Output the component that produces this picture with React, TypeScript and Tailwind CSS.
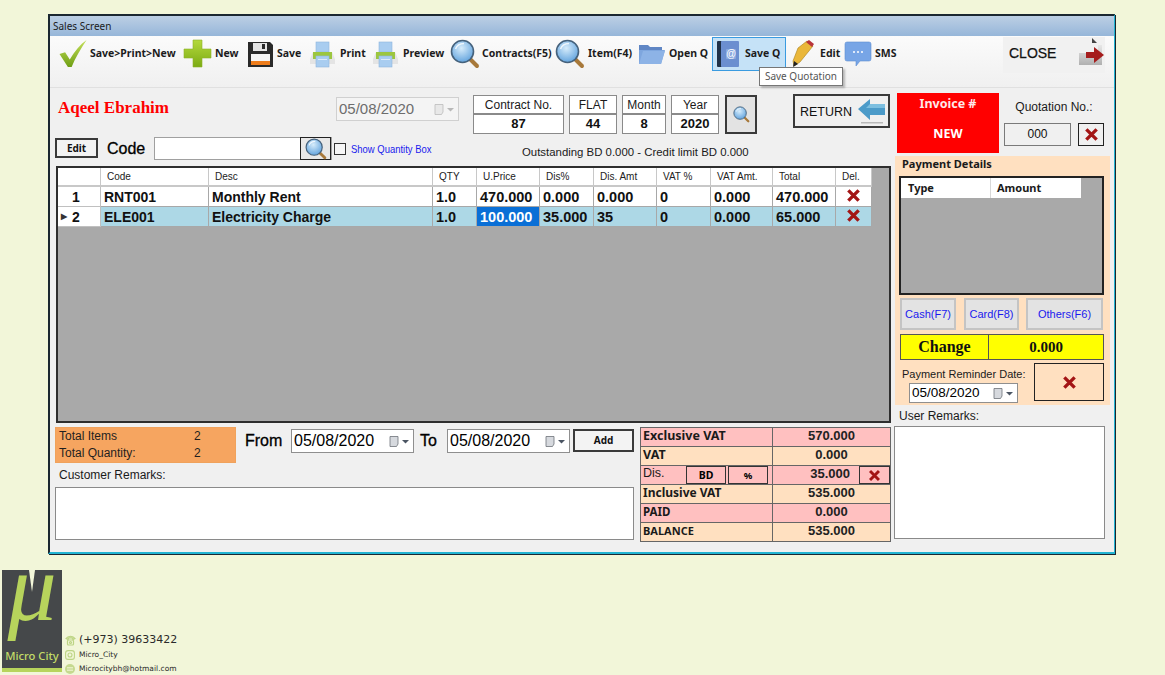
import type { ReactNode } from "react";

const uiBold = "font-['Noto_Sans',sans-serif] font-bold";
const heavy = "[-webkit-text-stroke:0.3px_#000]";

const rows = [
  { no: "1", code: "RNT001", desc: "Monthly Rent", qty: "1.0", price: "470.000", disPct: "0.000", disAmt: "0.000", vat: "0", vatAmt: "0.000", total: "470.000" },
  { no: "2", code: "ELE001", desc: "Electricity Charge", qty: "1.0", price: "100.000", disPct: "35.000", disAmt: "35", vat: "0", vatAmt: "0.000", total: "65.000" },
];

const columns = ["Code", "Desc", "QTY", "U.Price", "Dis%", "Dis. Amt", "VAT %", "VAT Amt.", "Total", "Del."];

function Magnifier({ size = 30 }: { size?: number }) {
  return (
    <svg width={size} height={size} viewBox="0 0 30 30">
      <defs>
        <radialGradient id="lens" cx="0.45" cy="0.35" r="0.7">
          <stop offset="0" stopColor="#d6ecfb" />
          <stop offset="1" stopColor="#5b9fdc" />
        </radialGradient>
      </defs>
      <path d="M19 19 L27 27" stroke="#a8793a" strokeWidth="4" strokeLinecap="round" />
      <circle cx="12.5" cy="12.5" r="11" fill="url(#lens)" stroke="#46627c" strokeWidth="1.6" />
      <path d="M5.5 10 C7 6 10 4.5 14 4.5" stroke="#ffffff" strokeWidth="1.6" fill="none" opacity="0.8" />
    </svg>
  );
}

function Check() {
  return (
    <svg width="31" height="28" viewBox="0 0 32 30">
      <defs>
        <linearGradient id="chk" x1="0" y1="0" x2="0" y2="1">
          <stop offset="0" stopColor="#c5e05a" />
          <stop offset="1" stopColor="#6e9e14" />
        </linearGradient>
      </defs>
      <path d="M1 15 L7 13 L12 21 C17 12 23 5 30 0 C24 9 18 19 14 29 L10 29 Z" fill="url(#chk)" />
    </svg>
  );
}

function Plus() {
  return (
    <svg width="29" height="30" viewBox="0 0 29 30">
      <defs>
        <linearGradient id="pls" x1="0" y1="0" x2="0" y2="1">
          <stop offset="0" stopColor="#b4d93c" />
          <stop offset="1" stopColor="#7cab14" />
        </linearGradient>
      </defs>
      <path d="M10 1 H19 V10 H28 V19 H19 V28 H10 V19 H1 V10 H10 Z" fill="url(#pls)" stroke="#8db32a" strokeWidth="0.6" />
    </svg>
  );
}

function Floppy() {
  return (
    <svg width="27" height="27" viewBox="0 0 27 27">
      <path d="M1 1 H23 L26 4 V26 H1 Z" fill="#2a2a2a" />
      <rect x="6" y="2" width="14" height="8" fill="#e4e4e4" />
      <rect x="15" y="3" width="3" height="5" fill="#2a2a2a" />
      <rect x="4" y="13" width="19" height="9" fill="#f4f4f4" />
      <rect x="4" y="20" width="19" height="4" fill="#ee7d1c" />
    </svg>
  );
}

function Printer() {
  return (
    <svg width="27" height="27" viewBox="0 0 27 27">
      <rect x="7" y="1" width="13" height="10" fill="#a9cdf0" stroke="#8fb5dc" strokeWidth="0.6" />
      <path d="M1 18 L4 11 H23 L26 18 V23 H1 Z" fill="#e4e4e4" />
      <rect x="4" y="11" width="19" height="7" fill="#9cc63f" />
      <rect x="7" y="15" width="13" height="11" fill="#a9cdf0" stroke="#8fb5dc" strokeWidth="0.6" />
      <rect x="9" y="18" width="9" height="1" fill="#dcebf9" />
    </svg>
  );
}

function Folder() {
  return (
    <svg width="28" height="24" viewBox="0 0 28 24">
      <path d="M1 3 H10 L12 5 H24 V9 H1 Z" fill="#5f86c4" />
      <path d="M1 22 L1 8 H27 L23 22 Z" fill="#7ea6de" />
      <path d="M5 9 H27 L23 22 H1 Z" fill="#8db3e6" />
    </svg>
  );
}

function Book() {
  return (
    <svg width="24" height="28" viewBox="0 0 24 28">
      <rect x="1" y="1" width="5" height="26" rx="1" fill="#1f3148" />
      <rect x="5" y="1" width="18" height="26" rx="1" fill="#6b8fd0" />
      <rect x="10" y="9" width="10" height="10" rx="1" fill="#89a8de" />
      <text x="15" y="17" textAnchor="middle" fontSize="10" fill="#ffffff" fontFamily="Liberation Sans">@</text>
    </svg>
  );
}

function Pencil() {
  return (
    <svg width="24" height="28" viewBox="0 0 24 28">
      <path d="M7 8 L16 1 L22 6 L9 22 L3 26 L2 21 Z" fill="#eab73a" stroke="#a8801c" strokeWidth="0.6" />
      <path d="M15 2 L18 0 L23 4 L21 7 Z" fill="#b8353b" />
      <path d="M3 21 L7 24 L2 27 Z" fill="#222222" />
    </svg>
  );
}

function Bubble() {
  return (
    <svg width="28" height="26" viewBox="0 0 28 26">
      <path d="M3 1 H25 Q27 1 27 3 V18 Q27 20 25 20 H16 L12 25 V20 H3 Q1 20 1 18 V3 Q1 1 3 1 Z" fill="#77a5e6" stroke="#5f8fd2" strokeWidth="0.6" />
      <circle cx="10" cy="11" r="1" fill="#ffffff" />
      <circle cx="14" cy="11" r="1" fill="#ffffff" />
      <circle cx="18" cy="11" r="1" fill="#ffffff" />
    </svg>
  );
}

function CloseIcon() {
  return (
    <svg width="28" height="30" viewBox="0 0 28 30">
      <defs>
        <linearGradient id="door" x1="0" y1="0" x2="0" y2="1">
          <stop offset="0" stopColor="#f8f8f8" />
          <stop offset="1" stopColor="#b0b0b0" />
        </linearGradient>
      </defs>
      <path d="M15 2 L21 8 V16 H2 V28 H25 V8 H21 L15 2 Z" fill="url(#door)" />
      <path d="M15 1 L20 6 H15 Z" fill="#444444" />
      <path d="M9 15 H17 V10 L27 18 L17 26 V21 H9 Z" fill="#a51d1d" />
    </svg>
  );
}

function ReturnArrow() {
  return (
    <svg width="30" height="28" viewBox="0 0 30 28">
      <path d="M1 12 L13 2 V7 H28 V18 H13 V23 Z" fill="#4c9bc9" />
      <path d="M13 7 H28 V11 H9 Z" fill="#7dbfe0" />
      <rect x="4" y="25" width="22" height="1.5" fill="#b9b9b9" />
    </svg>
  );
}

function RedX({ size = 16 }: { size?: number }) {
  return (
    <svg width={size} height={size} viewBox="0 0 16 16">
      <path d="M2.5 2.5 L13.5 13.5 M13.5 2.5 L2.5 13.5" stroke="#a31515" strokeWidth="3.6" />
    </svg>
  );
}

function CalendarDrop({ faded = false }: { faded?: boolean }) {
  return (
    <svg width="21" height="11" viewBox="0 0 21 11">
      <path d="M1 0.5 H9 V8 L7.5 10.5 H1 Z" fill={faded ? "#e8e8e8" : "#d6d9de"} stroke={faded ? "#bbbbbb" : "#6d7278"} strokeWidth="0.8" />
      <path d="M13 4 H20 L16.5 7.5 Z" fill={faded ? "#b8b8b8" : "#4b5563"} />
    </svg>
  );
}

function PhoneMark() {
  return (
    <svg width="11" height="11" viewBox="0 0 11 11" fill="none" stroke="#bcd484" strokeWidth="1.2">
      <path d="M1 3.5 C3 0.5 8 0.5 10 3.5 L8 4.5 L7 3 H4 L3 4.5 Z" fill="#cfe0a0" />
      <rect x="2.5" y="5" width="6" height="5" rx="1" />
      <circle cx="5.5" cy="7.5" r="1" />
    </svg>
  );
}

function InstaMark() {
  return (
    <svg width="10" height="10" viewBox="0 0 10 10" fill="none" stroke="#bcd484" strokeWidth="1.1">
      <rect x="0.6" y="0.6" width="8.8" height="8.8" rx="2.5" />
      <circle cx="5" cy="5" r="2" />
    </svg>
  );
}

function MailMark() {
  return (
    <svg width="10" height="10" viewBox="0 0 10 10">
      <circle cx="5" cy="5" r="5" fill="#c5d98f" />
      <path d="M2 3.5 H8 M2 5 H8 M2 6.5 H8" stroke="#f2f6d9" strokeWidth="0.7" />
    </svg>
  );
}

function Tool({ icon, label, className }: { icon: ReactNode; label: string; className: string }) {
  return (
    <div className={`flex h-[34px] shrink-0 items-center ${className}`}>
      {icon}
      <span className={`${uiBold} whitespace-nowrap text-[10.5px] text-[#1c1c1c]`}>{label}</span>
    </div>
  );
}

function InfoBox({ label, value, className }: { label: string; value: string; className: string }) {
  return (
    <div className={`flex h-[39px] shrink-0 flex-col border border-[#8a8a8a] bg-white text-center ${className}`}>
      <div className="h-[19px] border-b-2 border-[#8a8a8a] text-[12px] leading-[18px] text-[#1a1a1a]">{label}</div>
      <div className="flex-1 text-[13px] font-bold leading-[18px] text-[#111]">{value}</div>
    </div>
  );
}

function DateBox({ className }: { className: string }) {
  return (
    <div className={`flex shrink-0 items-center justify-between border border-[#8f8f8f] bg-white pl-[2px] pr-[3px] text-black ${className}`}>
      <span>05/08/2020</span>
      <CalendarDrop />
    </div>
  );
}

function SummaryRow({ label, value, pink, labelSize }: { label: string; value: string; pink: boolean; labelSize: string }) {
  return (
    <div className={`grid h-[19px] grid-cols-[132px_1fr] border-b border-[#666] ${pink ? "bg-[#ffc0c0]" : "bg-[#ffe0c0]"}`}>
      <div className={`${uiBold} border-r border-[#666] pl-[2px] leading-[15px] text-[#1a1a1a] ${labelSize}`}>{label}</div>
      <div className="text-center text-[13px] font-bold leading-[16px] text-[#222]">{value}</div>
    </div>
  );
}

export default function App() {
  return (
    <div className="flex h-[675px] w-[1165px] flex-col overflow-hidden bg-[#f2f6d9] font-['Liberation_Sans',Arial,sans-serif]">
      <div className="relative ml-[48px] mt-[14px] flex h-[540px] w-[1067px] shrink-0 flex-col border-b-2 border-l-2 border-r border-t-2 border-b-[#22b4d2] border-l-[#1b2730] border-r-[#22b4d2] border-t-[#1b2730] bg-[#f0f0f0] shadow-[1px_1px_0_#1b2730]">
        <div className="h-[20px] shrink-0 bg-gradient-to-b from-[#bccfe4] to-[#96b6d9] pl-[3px] font-['Noto_Sans',sans-serif] text-[10px] leading-[20px] text-[#1b1b1b]">
          Sales Screen
        </div>

        {/* toolbar */}
        <div className="flex h-[52px] shrink-0 items-start border-b border-[#e0e0e0] bg-gradient-to-b from-[#fbfbfb] to-[#f0f0f0] pl-[8px] pt-[1px]">
          <Tool icon={<Check />} label="Save>Print>New" className="w-[125px] gap-[1px]" />
          <Tool icon={<Plus />} label="New" className="w-[64px] gap-[3px]" />
          <Tool icon={<Floppy />} label="Save" className="w-[62px] gap-[3px]" />
          <Tool icon={<Printer />} label="Print" className="w-[63px] gap-[4px]" />
          <Tool icon={<Printer />} label="Preview" className="w-[78px] gap-[4px]" />
          <Tool icon={<Magnifier />} label="Contracts(F5)" className="w-[105px] gap-[2px]" />
          <Tool icon={<Magnifier />} label="Item(F4)" className="w-[83px] gap-[3px]" />
          <Tool icon={<Folder />} label="Open Q" className="w-[74px] gap-[3px]" />
          <div className="flex h-[34px] w-[74px] shrink-0 items-center gap-[5px] border border-[#3a9be0] bg-[#c5e2f7] pl-[3px]">
            <Book />
            <span className={`${uiBold} whitespace-nowrap text-[10.5px] text-[#1c1c1c]`}>Save Q</span>
          </div>
          <Tool icon={<Pencil />} label="Edit" className="ml-[5px] w-[53px] gap-[5px]" />
          <Tool icon={<Bubble />} label="SMS" className="w-[159px] gap-[3px]" />
          <div className="flex h-[36px] w-[102px] shrink-0 items-start justify-between bg-[#f1f1f1] pl-[6px]">
            <span className="mt-[7px] text-[14px] font-medium leading-[18px] text-[#111] [-webkit-text-stroke:0.25px_#111]">CLOSE</span>
            <CloseIcon />
          </div>
        </div>

        {/* tooltip over the toolbar */}
        <div className="absolute left-[709px] top-[51px] h-[19px] w-[84px] border border-[#767676] bg-white text-center font-['Noto_Sans',sans-serif] text-[10px] leading-[17px] text-[#555] shadow-[2px_2px_2px_rgba(0,0,0,0.25)]">
          Save Quotation
        </div>

        <div className="flex min-h-0 flex-1">
          {/* left column */}
          <div className="w-[843px] shrink-0">
            <div className="flex h-[46px] items-start">
              <div className="ml-[8px] mt-[11px] w-[278px] font-['Liberation_Serif',serif] text-[17px] font-bold leading-[18px] text-[#ff0000]">
                Aqeel Ebrahim
              </div>
              <div className="mt-[9px] flex h-[24px] w-[123px] items-center justify-between border border-[#d0d0d0] bg-[#f4f4f4] pl-[2px] pr-[3px] text-[15px] text-[#6d6d6d]">
                <span>05/08/2020</span>
                <CalendarDrop faded />
              </div>
              <div className="ml-[14px] mt-[7px] flex">
                <InfoBox label="Contract No." value="87" className="w-[91px]" />
                <InfoBox label="FLAT" value="44" className="ml-[5px] w-[48px]" />
                <InfoBox label="Month" value="8" className="ml-[5px] w-[44px]" />
                <InfoBox label="Year" value="2020" className="ml-[5px] w-[48px]" />
                <div className="ml-[6px] flex h-[39px] w-[32px] items-center justify-center border-2 border-[#3a3a3a] bg-[#e3e3e3]">
                  <Magnifier size={17} />
                </div>
              </div>
              <div className="ml-[36px] mt-[6px] flex h-[34px] w-[97px] items-center justify-between border-2 border-[#3a3a3a] bg-[#f0f0f0] pl-[5px] pr-[1px] text-[12.5px] text-[#111]">
                <span className="relative top-[1px]">RETURN</span>
                <ReturnArrow />
              </div>
            </div>

            <div className="flex h-[32px] items-start">
              <div className={`${uiBold} ml-[5px] mt-[4px] h-[20px] w-[43px] border-2 border-[#3a3a3a] bg-[#f3f3f3] text-center text-[10px] leading-[16px] text-[#111]`}>
                Edit
              </div>
              <div className={`ml-[9px] mt-[6px] w-[47px] text-[16px] font-medium leading-[18px] text-black ${heavy}`}>Code</div>
              <div className="mt-[3px] flex h-[23px] w-[178px] justify-end border border-[#a0a0a0] bg-white">
                <div className="-my-px flex h-[23px] w-[31px] items-center justify-center border border-[#222] bg-[#e8e8e8]">
                  <Magnifier size={22} />
                </div>
              </div>
              <div className="ml-[2px] mt-[9px] h-[12px] w-[12px] border border-[#333] bg-[#f6f6f6]" />
              <div className="ml-[5px] mt-[9px] w-[172px] origin-left scale-x-[0.86] whitespace-nowrap text-[11px] leading-[13px] text-[#1a1aee]">
                Show Quantity Box
              </div>
              <div className="ml-[-1px] mt-[11px] whitespace-nowrap text-[11.4px] leading-[14px] text-[#1a1a1a]">
                Outstanding BD 0.000 - Credit limit BD 0.000
              </div>
            </div>

            {/* items grid */}
            <div className="ml-[6px] h-[257px] w-[835px] border-2 border-[#2e2e2e] bg-[#a9a9a9]">
              <div className="grid w-[814px] grid-cols-[43px_108px_224px_44px_63px_54px_63px_54px_62px_63px_36px]">
                <div className="h-[19px] border-b-2 border-r border-[#c8c8c8] bg-white" />
                {columns.map((c) => (
                  <div key={c} className="h-[19px] border-b-2 border-r border-[#c8c8c8] bg-white pl-[6px] text-[10px] leading-[17px] text-[#222]">
                    {c}
                  </div>
                ))}
                {rows.map((r, i) => {
                  const selected = i === 1;
                  const cell = `h-[20px] border-b border-r border-[#a8a8a8] pl-[3px] text-[14px] font-bold leading-[20px] text-[#111] ${selected ? "bg-[#add8e6]" : "bg-white"}`;
                  const num = `h-[20px] border-b border-r border-[#a8a8a8] pl-[3px] text-[14.5px] font-bold leading-[20px] text-[#111] ${selected ? "bg-[#add8e6]" : "bg-white"}`;
                  return [
                    <div key={`${r.no}-n`} className="flex h-[20px] items-center border-b border-r border-[#c0c0c0] bg-white pl-[3px] text-[14px] font-bold text-[#111]">
                      <span className="w-[11px] text-[8px] leading-none text-[#333]">{selected ? "▶" : ""}</span>
                      <span className="relative top-[1px]">{r.no}</span>
                    </div>,
                    <div key={`${r.no}-c`} className={cell}>{r.code}</div>,
                    <div key={`${r.no}-d`} className={cell}>{r.desc}</div>,
                    <div key={`${r.no}-q`} className={num}>{r.qty}</div>,
                    <div key={`${r.no}-p`} className={selected ? "h-[20px] border-b border-r border-[#a8a8a8] bg-[#0a6fd6] pl-[3px] text-[14.5px] font-bold leading-[20px] text-white" : num}>{r.price}</div>,
                    <div key={`${r.no}-dp`} className={num}>{r.disPct}</div>,
                    <div key={`${r.no}-da`} className={num}>{r.disAmt}</div>,
                    <div key={`${r.no}-v`} className={num}>{r.vat}</div>,
                    <div key={`${r.no}-va`} className={num}>{r.vatAmt}</div>,
                    <div key={`${r.no}-t`} className={num}>{r.total}</div>,
                    <div key={`${r.no}-x`} className={`flex h-[20px] items-center justify-center border-b border-r border-[#a8a8a8] pb-[2px] ${selected ? "bg-[#add8e6]" : "bg-white"}`}>
                      <RedX size={15} />
                    </div>,
                  ];
                })}
              </div>
            </div>

            <div className="ml-[5px] mt-[4px] flex items-start">
              <div className="w-[579px] shrink-0">
                <div className="flex items-start">
                  <div className="grid h-[36px] w-[181px] grid-cols-[135px_1fr] border border-[#f0a25c] bg-[#f6a560] pl-[3px] text-[12px] leading-[17px] text-[#1f1f1f]">
                    <span>Total Items</span>
                    <span>2</span>
                    <span>Total Quantity:</span>
                    <span>2</span>
                  </div>
                  <span className={`ml-[9px] mt-[5px] w-[46px] text-[16px] font-medium leading-[18px] text-black ${heavy}`}>From</span>
                  <DateBox className="mt-[2px] h-[24px] w-[123px] text-[16px]" />
                  <span className={`ml-[6px] mt-[5px] w-[27px] text-[16px] font-medium leading-[18px] text-black ${heavy}`}>To</span>
                  <DateBox className="mt-[2px] h-[24px] w-[123px] text-[16px]" />
                  <div className={`${uiBold} ml-[3px] mt-[2px] h-[23px] w-[61px] border-2 border-[#3a3a3a] bg-[#f3f3f3] text-center text-[10px] leading-[19px] text-[#111]`}>
                    Add
                  </div>
                </div>
                <div className="ml-[4px] mt-[5px] text-[12px] leading-[14px] text-[#1a1a1a]">Customer Remarks:</div>
                <div className="mt-[5px] h-[53px] border border-[#8a8a8a] bg-white" />
              </div>

              <div className="ml-[6px] w-[251px] shrink-0 border-x border-t border-[#666]">
                <SummaryRow label="Exclusive VAT" value="570.000" pink labelSize="text-[12.5px]" />
                <SummaryRow label="VAT" value="0.000" pink={false} labelSize="text-[12.5px]" />
                <div className="grid h-[19px] grid-cols-[132px_1fr] border-b border-[#666] bg-[#ffc0c0]">
                  <div className="flex border-r border-[#666]">
                    <span className="w-[45px] pl-[2px] text-[12.5px] font-medium leading-[15px] text-[#1a1a1a]">Dis.</span>
                    <span className={`${uiBold} h-[18px] w-[40px] border border-[#333] text-center text-[10.5px] leading-[17px]`}>BD</span>
                    <span className={`${uiBold} ml-[2px] h-[18px] w-[40px] border border-[#333] text-center text-[9.5px] leading-[17px]`}>%</span>
                  </div>
                  <div className="flex justify-end">
                    <span className="pr-[9px] text-[13px] font-bold leading-[16px] text-[#222]">35.000</span>
                    <span className="flex h-[18px] w-[31px] items-center justify-center border border-[#333]">
                      <RedX size={13} />
                    </span>
                  </div>
                </div>
                <SummaryRow label="Inclusive VAT" value="535.000" pink={false} labelSize="text-[12px]" />
                <SummaryRow label="PAID" value="0.000" pink labelSize="text-[11.5px]" />
                <SummaryRow label="BALANCE" value="535.000" pink={false} labelSize="text-[11px]" />
              </div>
            </div>
          </div>

          {/* right column */}
          <div className="flex-1">
            <div className="flex h-[68px] items-start">
              <div className="ml-[4px] mt-[5px] h-[60px] w-[102px] bg-[#ff0000] text-center font-['Noto_Sans',sans-serif] text-[12.5px] font-bold text-[#ffe9e9]">
                <div className="pt-[3px] leading-[16px]">Invoice #</div>
                <div className="mt-[14px] leading-[16px] text-white">NEW</div>
              </div>
              <div className="ml-[5px] w-[100px]">
                <div className="mt-[11px] text-center text-[12px] leading-[16px] text-[#1a1a1a]">Quotation No.:</div>
                <div className="mt-[8px] flex">
                  <div className="h-[23px] w-[67px] border border-[#7a7a7a] bg-[#f0f0f0] text-center text-[12px] leading-[21px] text-[#111]">000</div>
                  <div className="ml-[7px] flex h-[23px] w-[26px] items-center justify-center border border-[#222] bg-[#f0f0f0]">
                    <RedX size={15} />
                  </div>
                </div>
              </div>
            </div>

            <div className="ml-[2px] h-[249px] w-[215px] bg-[#ffe0c0] pl-[4px] pt-[1px]">
              <div className={`${uiBold} pl-[3px] text-[11px] leading-[14px] text-[#1a1a1a]`}>Payment Details</div>
              <div className="mt-[5px] h-[119px] w-[205px] border-2 border-[#222] bg-[#a9a9a9]">
                <div className={`${uiBold} grid h-[20px] w-[180px] grid-cols-[90px_1fr] bg-white text-[11px] leading-[20px] text-[#1a1a1a]`}>
                  <span className="border-r border-[#d8d8d8] pl-[7px]">Type</span>
                  <span className="pl-[6px]">Amount</span>
                </div>
              </div>
              <div className="ml-[1px] mt-[3px] flex text-[11px] text-[#1a1aee]">
                <div className="h-[32px] w-[56px] border-2 border-[#c4c4c4] bg-[#e3e3e3] text-center leading-[28px]">Cash(F7)</div>
                <div className="ml-[8px] h-[32px] w-[55px] border-2 border-[#c4c4c4] bg-[#e3e3e3] text-center leading-[28px]">Card(F8)</div>
                <div className="ml-[7px] h-[32px] w-[77px] border-2 border-[#c4c4c4] bg-[#e3e3e3] text-center leading-[28px]">Others(F6)</div>
              </div>
              <div className="ml-[1px] mt-[4px] grid h-[26px] w-[204px] grid-cols-[88px_1fr] border border-[#555] bg-[#ffff00] font-['Liberation_Serif',serif] font-bold text-[#111]">
                <div className="border-r border-[#555] text-center text-[16px] leading-[24px]">Change</div>
                <div className="text-center text-[15px] leading-[24px]">0.000</div>
              </div>
              <div className="mt-[3px] flex items-start">
                <div className="w-[130px] shrink-0">
                  <div className="ml-[3px] mt-[4px] whitespace-nowrap text-[11px] leading-[14px] text-[#1a1a1a]">Payment Reminder Date:</div>
                  <DateBox className="ml-[10px] mt-[2px] h-[20px] w-[109px] text-[13.5px]" />
                </div>
                <div className="ml-[5px] flex h-[38px] w-[70px] items-center justify-center border border-[#222] bg-[#ffe0c0]">
                  <RedX size={15} />
                </div>
              </div>
            </div>

            <div className="ml-[6px] mt-[4px] text-[12px] leading-[14px] text-[#1a1a1a]">User Remarks:</div>
            <div className="ml-[1px] mt-[3px] h-[113px] w-[211px] border border-[#8a8a8a] bg-white" />
          </div>
        </div>
      </div>

      {/* logo and contact block */}
      <div className="ml-[2px] mt-[16px] flex items-start">
        <div className="relative flex h-[102px] w-[60px] flex-col items-center border-b-[4px] border-[#b7d45c] bg-[#45484a]">
          <div className="absolute left-[27px] top-0 h-0 w-0 border-x-[3px] border-t-[22px] border-x-transparent border-t-[#f2f6d9]" />
          <div className="h-[79px]">
            <span className="block h-[34px] font-['Liberation_Serif',serif] text-[98px] italic leading-[34px] text-[#b7d45c]">μ</span>
          </div>
          <span className="whitespace-nowrap font-['Noto_Sans',sans-serif] text-[11.2px] font-medium leading-[14px] text-[#c3dc68]">Micro City</span>
        </div>
        <div className="ml-[3px] mt-[63px] font-['DejaVu_Sans',sans-serif] text-[#2a2a2a]">
          <div className="flex h-[15px] items-center gap-[3px] text-[11px]">
            <PhoneMark />
            (+973) 39633422
          </div>
          <div className="flex h-[14px] items-center gap-[4px] text-[7.5px]">
            <InstaMark />
            <span>Micro_City</span>
          </div>
          <div className="flex h-[13px] items-center gap-[4px] text-[7.5px]">
            <MailMark />
            <span>Microcitybh@hotmail.com</span>
          </div>
        </div>
      </div>
    </div>
  );
}
